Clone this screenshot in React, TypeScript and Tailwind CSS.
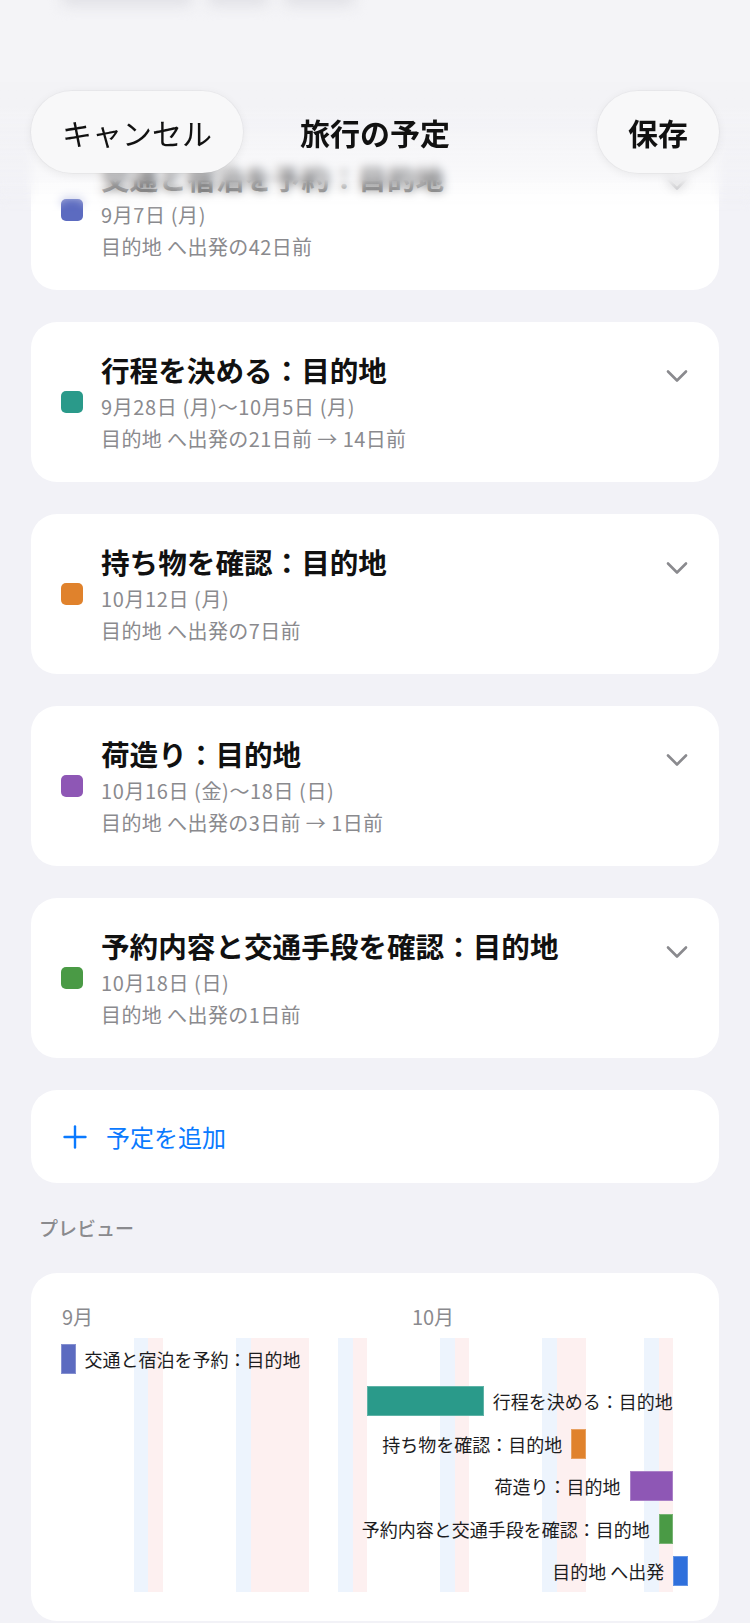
import { ChevronDown, Plus } from "lucide-react";

const plans = [
  {
    title: "交通と宿泊を予約：目的地",
    date: "9月7日 (月)",
    note: "目的地 へ出発の42日前",
    color: "#5c6bc0",
  },
  {
    title: "行程を決める：目的地",
    date: "9月28日 (月)〜10月5日 (月)",
    note: "目的地 へ出発の21日前 → 14日前",
    color: "#2a9a8a",
  },
  {
    title: "持ち物を確認：目的地",
    date: "10月12日 (月)",
    note: "目的地 へ出発の7日前",
    color: "#e0822c",
  },
  {
    title: "荷造り：目的地",
    date: "10月16日 (金)〜18日 (日)",
    note: "目的地 へ出発の3日前 → 1日前",
    color: "#8e57b5",
  },
  {
    title: "予約内容と交通手段を確認：目的地",
    date: "10月18日 (日)",
    note: "目的地 へ出発の1日前",
    color: "#4a9a45",
  },
];

// chart geometry (px inside the preview card)
const X0 = 30;
const DW = 14.58;
const saturdays = [5, 12, 19, 26, 33, 40];
const holidays = [6, 13, 14, 15, 16, 20, 27, 34, 35, 41];

const bars = [
  { label: "交通と宿泊を予約：目的地", start: 0, days: 1, color: "#5c6bc0", side: "right" },
  { label: "行程を決める：目的地", start: 21, days: 8, color: "#2a9a8a", side: "right" },
  { label: "持ち物を確認：目的地", start: 35, days: 1, color: "#e0822c", side: "left" },
  { label: "荷造り：目的地", start: 39, days: 3, color: "#8e57b5", side: "left" },
  { label: "予約内容と交通手段を確認：目的地", start: 41, days: 1, color: "#4a9a45", side: "left" },
  { label: "目的地 へ出発", start: 42, days: 1, color: "#2f70dc", side: "left" },
];

function PlanCard({ plan }: { plan: (typeof plans)[number] }) {
  return (
    <div className="flex h-[160px] rounded-[26px] bg-white pl-[30px] pr-[24px]">
      <div className="size-[22px] shrink-0 self-center rounded-[5px]" style={{ backgroundColor: plan.color }} />
      <div className="ml-[18px] flex flex-1 flex-col pt-[30px]">
        <div className="text-[28.6px] font-bold leading-[36px] text-[#111]">{plan.title}</div>
        <div className="mt-[4px] text-[20px] leading-[30px] tracking-[0.6px] text-[#8a8a8e]">{plan.date}</div>
        <div className="mt-[2px] text-[20px] leading-[30px] tracking-[0.4px] text-[#8a8a8e]">{plan.note}</div>
      </div>
      <ChevronDown
        size={36}
        strokeWidth={2.6}
        absoluteStrokeWidth
        className="mt-[36px] shrink-0 self-start text-[#8a8a8e]"
      />
    </div>
  );
}

function Preview() {
  return (
    <div className="relative mt-[31px] h-[348px] overflow-hidden rounded-[26px] bg-white">
      {saturdays.map((d) => (
        <div
          key={"s" + d}
          className="absolute top-[65px] h-[254px] bg-[#edf4fd]"
          style={{ left: X0 + d * DW, width: DW }}
        />
      ))}
      {holidays.map((d) => (
        <div
          key={"h" + d}
          className="absolute top-[65px] h-[254px] bg-[#fdf0f0]"
          style={{ left: X0 + d * DW, width: DW }}
        />
      ))}
      <span className="absolute top-[30px] text-[20px] leading-[28px] text-[#8a8a8e]" style={{ left: X0 + 1 }}>
        9月
      </span>
      <span className="absolute top-[30px] text-[20px] leading-[28px] text-[#8a8a8e]" style={{ left: X0 + 24 * DW + 1 }}>
        10月
      </span>
      {bars.map((b, i) => {
        const left = X0 + b.start * DW;
        const right = left + b.days * DW;
        const top = 71 + i * 42.4;
        return (
          <div key={b.label}>
            <div
              className="absolute h-[30px] shadow-[inset_0_0_0_1px_rgba(255,255,255,0.25)]"
              style={{ left, top, width: right - left, backgroundColor: b.color }}
            />
            <span
              className="absolute whitespace-nowrap text-[18px] leading-[30px] text-[#1c1c1e]"
              style={
                b.side === "right"
                  ? { left: right + 9, top }
                  : { left: left - 9, top, transform: "translateX(-100%)" }
              }
            >
              {b.label}
            </span>
          </div>
        );
      })}
    </div>
  );
}

export default function App() {
  return (
    <div className="relative h-[1623px] w-[750px] overflow-hidden bg-[#f2f2f7] font-['Noto_Sans_CJK_JP','Noto_Sans',sans-serif]">
      <main className="flex flex-col px-[31px] pt-[130px]">
        <div className="flex flex-col gap-[32px]">
          {plans.map((p) => (
            <PlanCard key={p.title} plan={p} />
          ))}
        </div>

        <div className="mt-[32px] flex h-[93px] items-center gap-[19px] rounded-[26px] bg-white pl-[32px] text-[#0a7aff]">
          <Plus size={36} strokeWidth={2.4} absoluteStrokeWidth className="-mx-[6px]" />
          <span className="text-[24px] leading-[32px]">予定を追加</span>
        </div>

        <p className="mt-[31px] pl-[8px] text-[19px] font-medium leading-[28px] text-[#8a8a8e]">プレビュー</p>

        <Preview />
      </main>

      {/* frosted top bar */}
      <div className="absolute inset-x-0 top-0 h-[82px] overflow-hidden bg-[#f4f4f7]">
        <div className="absolute left-[62px] top-[-16px] flex gap-[16px] blur-[7px]">
          <div className="h-[22px] w-[130px] rounded bg-[#e1e1e6]" />
          <div className="h-[22px] w-[60px] rounded bg-[#e1e1e6]" />
          <div className="h-[22px] w-[70px] rounded bg-[#e1e1e6]" />
        </div>
      </div>
      <div className="absolute inset-x-0 top-[82px] h-[130px] bg-linear-to-b from-[#f3f3f6] from-20% via-[#f3f3f6]/55 via-70% to-transparent backdrop-blur-[5px] [mask-image:linear-gradient(to_bottom,black_75%,transparent)]" />

      <div className="absolute inset-x-0 top-[91px] grid grid-cols-[1fr_auto_1fr] items-center px-[31px]">
        <button className="flex h-[82px] items-center justify-self-start rounded-full bg-[#f8f8f9] px-[31px] text-[30px] text-[#111] shadow-[0_2px_10px_rgba(0,0,0,0.07),0_0_0_1px_rgba(0,0,0,0.03)]">
          キャンセル
        </button>
        <h1 className="text-[30px] font-bold text-[#111]">旅行の予定</h1>
        <button className="flex h-[82px] items-center justify-self-end rounded-full bg-[#f8f8f9] px-[31px] text-[30px] font-bold text-[#111] shadow-[0_2px_10px_rgba(0,0,0,0.07),0_0_0_1px_rgba(0,0,0,0.03)]">
          保存
        </button>
      </div>
    </div>
  );
}
